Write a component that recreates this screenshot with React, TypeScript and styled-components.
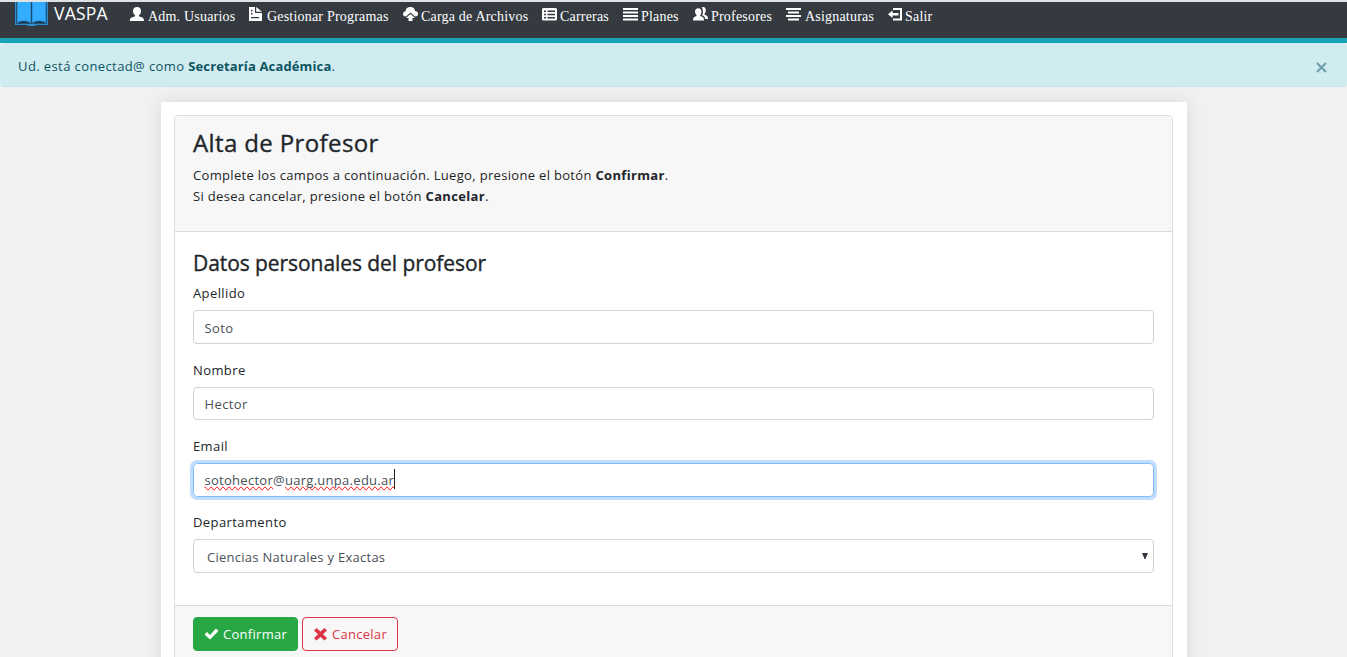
import React from "react";
import styled, { createGlobalStyle } from "styled-components";

const Global = createGlobalStyle`
  * { box-sizing: border-box; }
  html, body { margin: 0; height: 657px; overflow: hidden; background: #f1f1f1; }
  body { font-family: "Open Sans", "Noto Sans", sans-serif; font-size: 13px; line-height: 21px; letter-spacing: 0.4px; color: #212529; }
`;

const Page = styled.div`height: 657px; overflow: hidden;`;

const NavBar = styled.nav`
  height: 43px;
  display: flex;
  align-items: flex-start;
  background: #343a40;
  border-top: 2px solid #dfe3e6;
  border-bottom: 5px solid #17a2b8;
  padding-left: 15px;
  white-space: nowrap;
`;

const Brand = styled.a`
  display: flex;
  width: 114px;
  color: #fff;
  font-size: 17.5px;
  line-height: 23px;
  letter-spacing: 0.2px;
  svg { margin-right: 6px; flex: none; }
`;

const NavItem = styled.a<{ $width: number; $gap?: number }>`
  display: flex;
  flex: none;
  width: ${(p) => p.$width}px;
  gap: ${(p) => p.$gap ?? 4}px;
  color: #fff;
  font-family: "Liberation Serif", serif;
  font-size: 14px;
  line-height: 29px;
  letter-spacing: 0.2px;
  svg { flex: none; margin-top: 5px; }
`;

const Alert = styled.div`
  display: flex;
  justify-content: space-between;
  height: 44px;
  padding: 13px 20px 0 18px;
  border-bottom: 1px solid #bee5eb;
  border-radius: 4px;
  background: #d1ecf1;
  color: #0c5460;
  b { letter-spacing: 0.14px; }
  svg { margin-top: 6px; }
`;

const Container = styled.main`
  width: 1026px;
  height: 600px;
  margin: 15px 0 0 161px;
  padding: 13px 14px 0 13px;
  background: #fff;
  box-shadow: 0 0 16px rgba(0, 0, 0, 0.1);
`;

const Card = styled.form`
  height: 600px;
  border: 1px solid #dcdddf;
  border-radius: 4px;
  background: #fff;
  overflow: hidden;
`;

const CardHeader = styled.header`
  height: 116px;
  padding: 11px 18px 0;
  background: #f7f7f7;
  border-bottom: 1px solid #d9dadb;
  p { margin: 6px 0 0; letter-spacing: 0.32px; }
`;

const Title = styled.h1`
  margin: 0;
  font-size: 24px;
  line-height: 32px;
  font-weight: 400;
  letter-spacing: 0.38px;
  -webkit-text-stroke: 0.35px #212529;
`;

const CardBody = styled.section`
  height: 373px;
  padding: 17px 18px 0;
`;

const SubTitle = styled.h2`
  margin: 0 0 6.3px;
  font-size: 21px;
  line-height: 28px;
  font-weight: 400;
  letter-spacing: -0.07px;
  -webkit-text-stroke: 0.35px #212529;
`;

const Field = styled.div`
  height: 76.35px;
  label { display: block; margin-bottom: 6px; }
`;

const Control = styled.div<{ $focus?: boolean; $select?: boolean }>`
  display: flex;
  align-items: center;
  justify-content: space-between;
  height: 33.6px;
  padding: 2px ${(p) => (p.$select ? 5 : 10)}px 0 ${(p) => (p.$select ? 13 : 10.5)}px;
  border: 1px solid ${(p) => (p.$focus ? "#80bdff" : "#ced4da")};
  border-radius: 4px;
  color: #495057;
  letter-spacing: ${(p) => (p.$select ? 0.27 : 0.4)}px;
  box-shadow: ${(p) => (p.$focus ? "0 0 0 3px #bfdeff" : "none")};
  svg { margin-bottom: 3px; }
`;

const Misspelled = styled.span`
  text-decoration-line: spelling-error;
`;

const EmailText = styled.span`
  display: flex;
  letter-spacing: 0.28px;
`;

const Caret = styled.i`
  width: 1px;
  height: 20px;
  margin-top: -1px;
  background: #222;
`;

const CardFooter = styled.footer`
  display: flex;
  gap: 4px;
  height: 110px;
  padding: 11px 18px;
  background: #f7f7f7;
  border-top: 1px solid #d9dadb;
`;

const Button = styled.button<{ $outline?: boolean; $width: number }>`
  display: flex;
  align-items: center;
  gap: 4px;
  width: ${(p) => p.$width}px;
  height: 34px;
  padding: 0 0 0 10px;
  border: 1px solid ${(p) => (p.$outline ? "#dc3545" : "#28a745")};
  border-radius: 4px;
  background: ${(p) => (p.$outline ? "transparent" : "#28a745")};
  color: ${(p) => (p.$outline ? "#dc3545" : "#fff")};
  font: inherit;
  letter-spacing: 0.28px;
`;

const Glyph = ({ children, w = 15 }: { children: React.ReactNode; w?: number }) => (
  <svg width={w} height={17} viewBox={`0 0 ${w} 17`} fill="#fff">{children}</svg>
);

const BookLogo = () => (
  <svg width="33" height="24" viewBox="0 0 33 24">
    <path d="M0 0H33V23H20.500V24H12.500V23H0Z" fill="#2b8fd6" />
    <path d="M1.500 0V21.500H31.500V0" fill="none" stroke="#24455e" strokeWidth=".8" />
    <path d="M3 0H15.500V20Q10 17 3 19.500ZM17.500 0H30V19.500Q23 17 17.500 20Z" fill="#33adff" />
    <path d="M3 20.500Q10 18 15.500 21H3ZM30 20.500Q23 18 17.500 21H30Z" fill="#173247" />
    <path d="M16.500 0V21" stroke="#1d4b6d" strokeWidth="1.2" />
  </svg>
);

export default function App() {
  return (
    <Page>
      <Global />
      <NavBar>
        <Brand><BookLogo />VASPA</Brand>
        <NavItem $width={120}>
          <Glyph><path d="M8 0C10.500 0 12 1.500 12 4C12 6 11 7.500 9.800 8.500V9.200L13.800 10.700Q15 11.500 15 14H.7Q.7 11.500 2 10.700L6.200 9.200V8.500C5 7.500 4 6 4 4C4 1.500 5.500 0 8 0Z" /></Glyph>
          Adm. Usuarios
        </NavItem>
        <NavItem $width={154}>
          <Glyph w={14}><path fillRule="evenodd" d="M0 0H6V6H13V14H0ZM2 3H3.500V4.500H2ZM2 6H3.500V7.500H2ZM2 10V11.200H10V10ZM7.200 0L13 4.800H7.200Z" /></Glyph>
          Gestionar Programas
        </NavItem>
        <NavItem $width={139} $gap={3}>
          <Glyph><path d="M3 9.500Q0 9.500 0 7Q0 4.500 2.500 4.200Q3 0 7.500 0Q11.500 0 12 4Q15 4.300 15 7Q15 9.500 12 9.500L7.500 5.500Z" /><path d="M7.500 7L12 11H9.500V14H5.500V11H3Z" /></Glyph>
          Carga de Archivos
        </NavItem>
        <NavItem $width={81} $gap={3}>
          <Glyph><path fillRule="evenodd" d="M1.500 1H13.500Q15 1 15 2.500V12Q15 13.500 13.500 13.500H1.500Q0 13.500 0 12V2.500Q0 1 1.500 1ZM2 3.500V5H4V3.500ZM5.500 3.500V5H13V3.500ZM2 6.700V8.200H4V6.700ZM5.500 6.700V8.200H13V6.700ZM2 9.900V11.400H4V9.900ZM5.500 9.900V11.400H13V9.900Z" /></Glyph>
          Carreras
        </NavItem>
        <NavItem $width={70} $gap={3}>
          <Glyph><path d="M0 1H15V3H0ZM0 4.500H15V6.500H0ZM0 8H15V10H0ZM0 11.500H15V13.500H0Z" /></Glyph>
          Planes
        </NavItem>
        <NavItem $width={93} $gap={3}>
          <Glyph><path d="M5.300 1.200C7.500 1.200 8.500 2.500 8.500 4.700Q8.500 6.700 7.300 8V9L9.800 10Q11 10.700 11 13.500H0Q0 10.700 1.200 10L3.500 9V8Q2 6.700 2 4.700C2 2.500 3.200 1.200 5.300 1.200Z" /><path d="M8.700.2Q12.800-.6 12.800 3.500Q12.800 5.500 11.600 6.800V7.800L14 8.800Q15 9.500 15 12H12.200Q12 9.500 10.500 8.900L9 8Q10 6.500 10 4.500Q10 2 8.700.2Z" /></Glyph>
          Profesores
        </NavItem>
        <NavItem $width={102}>
          <Glyph><path d="M0 1H15V3H0ZM2 4.500H13V6.500H2ZM0 8H15V10H0ZM2 11.500H13V13.500H2Z" /></Glyph>
          Asignaturas
        </NavItem>
        <NavItem $width={60} $gap={2}>
          <Glyph><path d="M0 7.300L4.500 3.500V6H10.500V8.500H4.500V11ZM5 1H14V13.500H5V11.500H12V3H5Z" /></Glyph>
          Salir
        </NavItem>
      </NavBar>
      <Alert>
        <span>Ud. está conectad@ como <b>Secretaría Académica</b>.</span>
        <svg width="11" height="11" viewBox="0 0 11 11"><path d="M1 1L10 10M10 1L1 10" stroke="#6f9fa9" strokeWidth="2.2" /></svg>
      </Alert>
      <Container>
        <Card>
          <CardHeader>
            <Title>Alta de Profesor</Title>
            <p>
              Complete los campos a continuación. Luego, presione el botón <b>Confirmar</b>.<br />
              Si desea cancelar, presione el botón <b>Cancelar</b>.
            </p>
          </CardHeader>
          <CardBody>
            <SubTitle>Datos personales del profesor</SubTitle>
            <Field><label>Apellido</label><Control>Soto</Control></Field>
            <Field><label>Nombre</label><Control>Hector</Control></Field>
            <Field>
              <label>Email</label>
              <Control $focus>
                <EmailText><Misspelled>sotohector</Misspelled>@<Misspelled>uarg.unpa.edu.ar</Misspelled><Caret /></EmailText>
              </Control>
            </Field>
            <Field>
              <label>Departamento</label>
              <Control $select>
                Ciencias Naturales y Exactas
                <svg width="6" height="6" viewBox="0 0 6 6"><path d="M0 0H6L3.500 6H2.500Z" fill="#343a40" /></svg>
              </Control>
            </Field>
          </CardBody>
          <CardFooter>
            <Button type="button" $width={105}>
              <svg width="15" height="14" viewBox="0 0 15 14"><path d="M0.500 7.500L3 5L6 8L12 1.500L14.500 4L6 12.500Z" fill="#fff" /></svg>
              Confirmar
            </Button>
            <Button type="button" $outline $width={96}>
              <svg width="15" height="14" viewBox="0 0 15 14"><path d="M1 3.500L3.500 1L7.500 4.500L11.500 1L14 3.500L10 7.300L14 11L11.500 13.500L7.500 10L3.500 13.500L1 11L5 7.300Z" fill="#dc3545" /></svg>
              Cancelar
            </Button>
          </CardFooter>
        </Card>
      </Container>
    </Page>
  );
}
